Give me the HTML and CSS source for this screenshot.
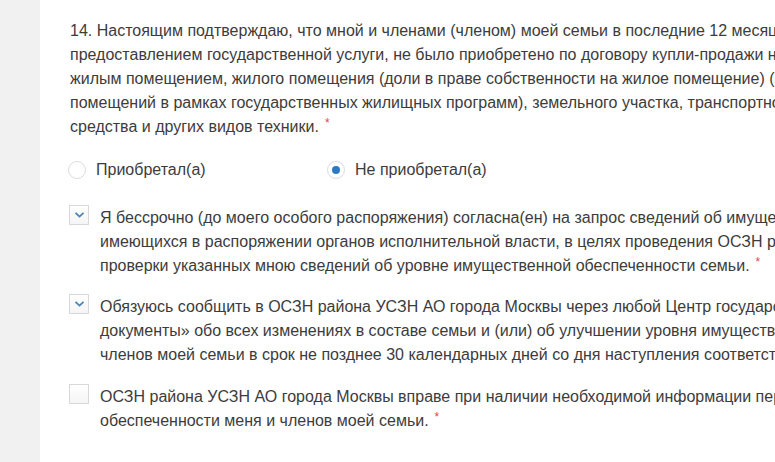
FILE: index.html
```html
<!DOCTYPE html>
<html lang="ru">
<head>
<meta charset="utf-8">
<link rel="stylesheet" href="styles.css">
</head>
<body>
<div class="page">
  <div class="side"></div>
  <main class="content">
    <p class="question">14. Настоящим подтверждаю, что мной и членами (членом) моей семьи в последние 12 месяцев<br>предоставлением государственной услуги, не было приобретено по договору купли-продажи на<br>жилым помещением, жилого помещения (доли в праве собственности на жилое помещение) (за<br>помещений в рамках государственных жилищных программ), земельного участка, транспортного<br>средства и других видов техники.<span class="req">*</span></p>

    <div class="radios">
      <label class="radio"><span class="circle"></span><span>Приобретал(а)</span></label>
      <label class="radio"><span class="circle on"></span><span>Не приобретал(а)</span></label>
    </div>

    <div class="checks">
      <div class="check">
        <span class="box on"><svg width="11" height="8" viewBox="0 0 11 8"><path d="M1.5 1.8 L5.5 5.6 L9.5 1.8" fill="none" stroke="#4a83b4" stroke-width="1.8"/></svg></span>
        <p class="ctext">Я бессрочно (до моего особого распоряжения) согласна(ен) на запрос сведений об имуществе,<br>имеющихся в распоряжении органов исполнительной власти, в целях проведения ОСЗН района<br>проверки указанных мною сведений об уровне имущественной обеспеченности семьи.<span class="req">*</span></p>
      </div>
      <div class="check">
        <span class="box on"><svg width="11" height="8" viewBox="0 0 11 8"><path d="M1.5 1.8 L5.5 5.6 L9.5 1.8" fill="none" stroke="#4a83b4" stroke-width="1.8"/></svg></span>
        <p class="ctext">Обязуюсь сообщить в ОСЗН района УСЗН АО города Москвы через любой Центр государственных<br>документы» обо всех изменениях в составе семьи и (или) об улучшении уровня имущественной<br>членов моей семьи в срок не позднее 30 календарных дней со дня наступления соответствующих</p>
      </div>
      <div class="check last">
        <span class="box"></span>
        <p class="ctext">ОСЗН района УСЗН АО города Москвы вправе при наличии необходимой информации перепроверить<br>обеспеченности меня и членов моей семьи.<span class="req">*</span></p>
      </div>
    </div>
  </main>
</div>
</body>
</html>
```

FILE: styles.css
```css
html, body {
  margin: 0;
  padding: 0;
  overflow: hidden;
}
body {
  background: #f1f1f1;
  font-family: "Liberation Sans", Arial, sans-serif;
  font-size: 16px;
  color: #3c3c3c;
}
.page {
  display: flex;
  width: 775px;
  height: 462px;
  overflow: hidden;
}
.side {
  flex: 0 0 40px;
  background: #f1f1f1;
}
.content {
  flex: 1 1 auto;
  background: #fff;
  padding: 19px 0 0 30px;
  min-width: 0;
  overflow: hidden;
}
.question {
  margin: 0;
  line-height: 24px;
  white-space: nowrap;
}
.req {
  color: #e0474c;
  font-size: 12px;
  vertical-align: top;
  line-height: 16px;
  margin-left: 6px;
}
.radios {
  display: flex;
  margin-top: 19px;
  height: 24px;
  align-items: center;
}
.radio {
  display: flex;
  align-items: center;
  gap: 10px;
  width: 259px;
  line-height: 24px;
}
.circle {
  box-sizing: border-box;
  width: 18px;
  height: 18px;
  border: 1px solid #dcdcdc;
  border-radius: 50%;
  display: flex;
  align-items: center;
  justify-content: center;
  flex: 0 0 auto;
  margin-left: -2px;
}
.circle.on::after {
  content: "";
  width: 8px;
  height: 8px;
  border-radius: 50%;
  background: #2b7bc4;
}
.checks {
  margin-top: 24px;
  display: flex;
  flex-direction: column;
  gap: 17px;
}
.check {
  display: flex;
  align-items: flex-start;
  gap: 11px;
}
.check.last {
  margin-top: 1px;
}
.box {
  box-sizing: border-box;
  flex: 0 0 auto;
  width: 20px;
  height: 20px;
  margin-top: -1px;
  margin-left: -1px;
  border: 1px solid #d8d8d8;
  background: linear-gradient(#fff, #f5f5f5);
  display: flex;
  align-items: center;
  justify-content: center;
}
.ctext {
  margin: 0;
  line-height: 24px;
  white-space: nowrap;
}
```
